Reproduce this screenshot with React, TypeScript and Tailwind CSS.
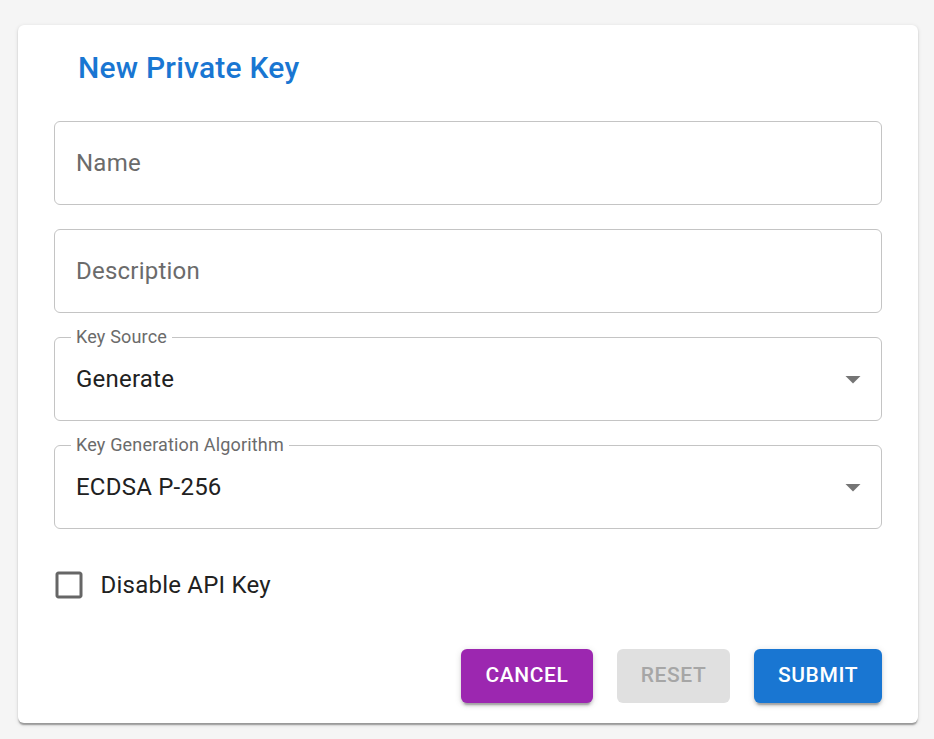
import React from "react";

function TextInput({ placeholder }: { placeholder: string }) {
  return (
    <div className="h-[84px] rounded-[6px] border border-[#c4c4c4] flex items-center px-[21px]">
      <span className="text-[24px] leading-[34.5px] tracking-[0.225px] text-[#6b6b6b]">{placeholder}</span>
    </div>
  );
}

function SelectInput({ label, value }: { label: string; value: string }) {
  return (
    <div className="relative h-[84px] rounded-[6px] border border-[#c4c4c4] flex items-center pl-[21px] pr-[10px]">
      <span className="absolute left-[16px] top-[-14px] bg-white px-[5px] text-[18px] leading-[26px] tracking-[0.17px] text-[#6b6b6b]">
        {label}
      </span>
      <span className="flex-1 text-[24px] leading-[34.5px] tracking-[0.225px] text-[#212121]">{value}</span>
      <svg width="36" height="36" viewBox="0 0 24 24" className="shrink-0">
        <path d="M7 10l5 5 5-5z" fill="rgba(0,0,0,0.54)" />
      </svg>
    </div>
  );
}

export default function App() {
  return (
    <div
      className="min-h-screen bg-[#f5f5f5] pt-[25px] pl-[18px] pb-[16px]"
      style={{ fontFamily: "Roboto, 'Noto Sans', Arial, sans-serif" }}
    >
      <div className="w-[900px] bg-white rounded-[6px] shadow-[0px_3px_1.5px_-1.5px_rgba(0,0,0,0.2),0px_1.5px_1.5px_0px_rgba(0,0,0,0.14),0px_1.5px_4.5px_0px_rgba(0,0,0,0.12)] pt-[19px] pb-[20px] px-[36px]">
        <div className="ml-[24px] h-[48px] text-[30px] leading-[48px] tracking-[0.225px] font-medium text-[#1976d2]">
          New Private Key
        </div>
        <div className="mt-[29px] flex flex-col gap-[24px]">
          <TextInput placeholder="Name" />
          <TextInput placeholder="Description" />
          <SelectInput label="Key Source" value="Generate" />
          <SelectInput label="Key Generation Algorithm" value="ECDSA P-256" />
        </div>
        <div className="mt-[24px] h-[63px] flex items-center ml-[-16.5px]">
          <div className="w-[63px] h-[63px] flex items-center justify-center">
            <svg width="36" height="36" viewBox="0 0 24 24">
              <path
                d="M19 5v14H5V5h14m0-2H5c-1.11 0-2 .9-2 2v14c0 1.1.89 2 2 2h14c1.1 0 2-.9 2-2V5c0-1.1-.9-2-2-2z"
                fill="rgba(0,0,0,0.6)"
              />
            </svg>
          </div>
          <span className="text-[24px] leading-[36px] tracking-[0.225px] text-[#212121]">Disable API Key</span>
        </div>
        <div className="mt-[32.5px] flex justify-end gap-[24px]">
          <button className="h-[54px] w-[132px] rounded-[6px] bg-[#9c27b0] text-white text-[21px] font-medium tracking-[0.6px] uppercase shadow-[0px_4.5px_1.5px_-3px_rgba(0,0,0,0.2),0px_3px_3px_0px_rgba(0,0,0,0.14),0px_1.5px_7.5px_0px_rgba(0,0,0,0.12)]">
            Cancel
          </button>
          <button className="h-[54px] w-[113px] rounded-[6px] bg-[#e0e0e0] text-[#a6a6a6] text-[21px] font-medium tracking-[0.6px] uppercase">
            Reset
          </button>
          <button className="h-[54px] w-[128px] rounded-[6px] bg-[#1976d2] text-white text-[21px] font-medium tracking-[0.6px] uppercase shadow-[0px_4.5px_1.5px_-3px_rgba(0,0,0,0.2),0px_3px_3px_0px_rgba(0,0,0,0.14),0px_1.5px_7.5px_0px_rgba(0,0,0,0.12)]">
            Submit
          </button>
        </div>
      </div>
    </div>
  );
}
